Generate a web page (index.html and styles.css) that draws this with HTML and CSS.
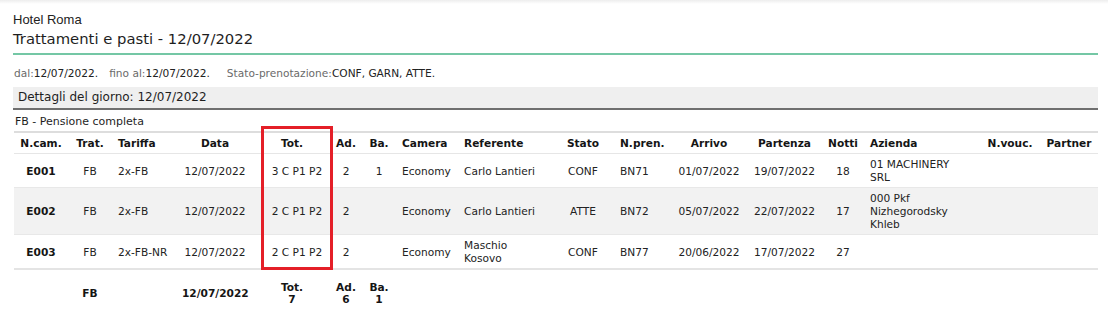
FILE: index.html
```html
<!DOCTYPE html>
<html lang="it">
<head>
<meta charset="utf-8">
<title>Trattamenti e pasti</title>
<link rel="stylesheet" href="styles.css">
</head>
<body>
<div class="topshade"></div>
<div class="page">
  <div class="hotel">Hotel Roma</div>
  <h1 class="title">Trattamenti e pasti - 12/07/2022</h1>
  <div class="filters">
    <span class="flt"><span class="lbl">dal:</span>12/07/2022.</span>
    <span class="flt wide"><span class="lbl">fino al:</span>12/07/2022.</span>
    <span class="flt"><span class="lbl">Stato-prenotazione:</span>CONF, GARN, ATTE.</span>
  </div>
  <div class="dayhead">Dettagli del giorno: 12/07/2022</div>
  <div class="board">FB - Pensione completa</div>
  <div class="tablewrap">
    <table class="grid">
      <colgroup>
        <col class="c-cam"><col class="c-trat"><col class="c-tar"><col class="c-data"><col class="c-tot">
        <col class="c-ad"><col class="c-ba"><col class="c-camera"><col class="c-ref"><col class="c-stato">
        <col class="c-npren"><col class="c-arr"><col class="c-par"><col class="c-notti"><col class="c-az">
        <col class="c-vouc"><col class="c-partner">
      </colgroup>
      <thead>
        <tr>
          <th>N.cam.</th><th>Trat.</th><th class="l tar">Tariffa</th><th>Data</th><th>Tot.</th>
          <th>Ad.</th><th>Ba.</th><th class="l">Camera</th><th class="l">Referente</th><th>Stato</th>
          <th class="l">N.pren.</th><th>Arrivo</th><th>Partenza</th><th>Notti</th><th class="l az">Azienda</th>
          <th>N.vouc.</th><th>Partner</th>
        </tr>
      </thead>
      <tbody>
        <tr>
          <td class="b">E001</td><td>FB</td><td class="l tar">2x-FB</td><td>12/07/2022</td><td class="tot">3 C P1 P2</td>
          <td>2</td><td>1</td><td class="l">Economy</td><td class="l">Carlo Lantieri</td><td>CONF</td>
          <td class="l">BN71</td><td>01/07/2022</td><td>19/07/2022</td><td>18</td><td class="l az">01 MACHINERY SRL</td>
          <td></td><td></td>
        </tr>
        <tr class="alt">
          <td class="b">E002</td><td>FB</td><td class="l tar">2x-FB</td><td>12/07/2022</td><td class="tot">2 C P1 P2</td>
          <td>2</td><td></td><td class="l">Economy</td><td class="l">Carlo Lantieri</td><td>ATTE</td>
          <td class="l">BN72</td><td>05/07/2022</td><td>22/07/2022</td><td>17</td><td class="l az">000 Pkf Nizhegorodsky Khleb</td>
          <td></td><td></td>
        </tr>
        <tr>
          <td class="b">E003</td><td>FB</td><td class="l tar">2x-FB-NR</td><td>12/07/2022</td><td class="tot">2 C P1 P2</td>
          <td>2</td><td></td><td class="l">Economy</td><td class="l">Maschio Kosovo</td><td>CONF</td>
          <td class="l">BN77</td><td>20/06/2022</td><td>17/07/2022</td><td>27</td><td class="l az"></td>
          <td></td><td></td>
        </tr>
      </tbody>
      <tfoot>
        <tr>
          <td></td><td>FB</td><td></td><td>12/07/2022</td><td>Tot.<br>7</td>
          <td>Ad.<br>6</td><td>Ba.<br>1</td><td></td><td></td><td></td>
          <td></td><td></td><td></td><td></td><td></td><td></td><td></td>
        </tr>
      </tfoot>
    </table>
    <div class="highlight"></div>
  </div>
</div>
</body>
</html>
```

FILE: styles.css
```css
html, body {
  margin: 0;
  padding: 0;
  background: #ffffff;
}

body {
  font-family: "DejaVu Sans", Verdana, sans-serif;
  color: #222222;
}

.topshade {
  height: 4px;
  background: linear-gradient(to bottom, rgba(0, 0, 0, 0.07), rgba(0, 0, 0, 0));
}

.page {
  margin-left: 13px;
  width: 1085px;
}

.hotel {
  margin-top: 8px;
  font-family: "Liberation Sans", Arial, sans-serif;
  font-size: 13px;
  line-height: 16px;
  color: #222222;
}

.title {
  margin: 1px 0 0 0;
  font-size: 14.8px;
  font-weight: normal;
  line-height: 20px;
  color: #1e1e1e;
  padding-bottom: 4px;
  border-bottom: 2px solid #74c7a5;
}

.filters {
  margin-top: 11px;
  font-size: 10.6px;
  line-height: 14px;
  color: #222222;
  padding-left: 1px;
  display: flex;
}

.flt {
  margin-right: 11px;
  white-space: nowrap;
}

.flt.wide {
  margin-right: 17px;
}

.lbl {
  color: #6a6a6a;
}

.dayhead {
  margin-top: 7px;
  height: 21px;
  line-height: 21px;
  font-size: 12px;
  padding-left: 5px;
  background: #efefef;
  border-bottom: 2px solid #6f6f6f;
  color: #1e1e1e;
}

.board {
  margin-top: 5px;
  font-size: 11px;
  line-height: 14px;
  padding-left: 2px;
  color: #1e1e1e;
}

.tablewrap {
  position: relative;
  margin-top: 2px;
  margin-left: 1px;
  width: 1084px;
}

.grid {
  width: 1084px;
  table-layout: fixed;
  border-collapse: collapse;
  font-size: 10.6px;
  line-height: 13px;
  color: #222222;
}

.c-cam { width: 54px; }
.c-trat { width: 44px; }
.c-tar { width: 66px; }
.c-data { width: 74px; }
.c-tot { width: 80px; }
.c-ad { width: 28px; }
.c-ba { width: 38px; }
.c-camera { width: 62px; }
.c-ref { width: 90px; }
.c-stato { width: 66px; }
.c-npren { width: 56px; }
.c-arr { width: 74px; }
.c-par { width: 77px; }
.c-notti { width: 40px; }
.c-az { width: 117px; }
.c-vouc { width: 60px; }
.c-partner { width: 58px; }

.grid th,
.grid td {
  text-align: center;
  vertical-align: middle;
  padding: 4px 4px 3px 4px;
  white-space: normal;
  overflow: visible;
}

.grid thead tr {
  border-top: 2px solid #dddddd;
  border-bottom: 1px solid #e6e6e6;
}

.grid th {
  font-weight: bold;
  color: #151515;
  height: 13px;
}

.grid tbody tr {
  border-bottom: 1px solid #e8e8e8;
}

.grid tbody tr:last-child {
  border-bottom: 2px solid #e4e4e4;
}

.grid tbody tr.alt {
  background: #f2f2f2;
}

.grid .l {
  text-align: left;
}

.grid .tar {
  padding-left: 6px;
}

.grid .az {
  padding-left: 7px;
  padding-right: 18px;
}

.grid .tot {
  padding-left: 14px;
}

.grid .b {
  font-weight: bold;
  color: #151515;
}

.grid tfoot td {
  font-weight: bold;
  color: #151515;
  line-height: 12px;
  padding-top: 11px;
  padding-bottom: 10px;
}

.highlight {
  position: absolute;
  left: 247px;
  top: -5px;
  width: 72px;
  height: 144px;
  box-sizing: border-box;
  border: 3px solid #e41f28;
}
```
